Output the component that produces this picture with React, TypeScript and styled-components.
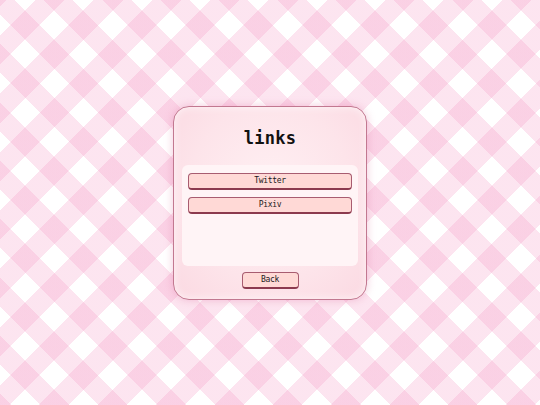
import * as React from 'react';
import styled, { createGlobalStyle } from 'styled-components';

const GlobalStyle = createGlobalStyle`
  html, body {
    margin: 0;
    padding: 0;
  }
  body {
    font-family: "DejaVu Sans Mono", "Liberation Mono", monospace;
    overflow: hidden;
  }
`;

// two diagonal stripe layers crossing give the gingham cloth
const stripe = 'rgba(245, 150, 195, 0.25)';

const Page = styled.div`
  width: 100vw;
  height: 100vh;
  display: flex;
  align-items: center;
  justify-content: center;
  background-color: #ffffff;
  background-image:
    repeating-linear-gradient(
      45deg,
      ${stripe} 0px 7.96px,
      transparent 7.96px 28.6px,
      ${stripe} 28.6px 41.25px
    ),
    repeating-linear-gradient(
      135deg,
      ${stripe} 0px 4.56px,
      transparent 4.56px 25.2px,
      ${stripe} 25.2px 41.25px
    );
`;

const Card = styled.div`
  box-sizing: border-box;
  width: 194px;
  height: 194px;
  display: flex;
  flex-direction: column;
  padding: 0 8px 10px;
  border: 1px solid #c27890;
  border-radius: 16px;
  background: radial-gradient(ellipse at 50% 45%, #fff0f3 0%, #fde4ea 60%, #fbd9e2 100%);
  box-shadow:
    0 0 8px rgba(225, 120, 165, 0.4),
    inset 0 0 8px rgba(255, 255, 255, 0.7);
`;

const Title = styled.h1`
  height: 58px;
  margin: 0;
  padding-top: 4px;
  box-sizing: border-box;
  display: flex;
  align-items: center;
  justify-content: center;
  font-size: 17px;
  font-weight: bold;
  letter-spacing: 0.3px;
  color: #111;
`;

const Panel = styled.div`
  height: 101px;
  box-sizing: border-box;
  padding: 8px 6px;
  display: flex;
  flex-direction: column;
  gap: 7px;
  background: #fff4f6;
  border-radius: 6px;
`;

interface ButtonProps {
  $width?: number;
}

const PinkButton = styled.button<ButtonProps>`
  box-sizing: border-box;
  width: ${(p) => (p.$width ? `${p.$width}px` : '100%')};
  height: 17px;
  padding: 0;
  display: flex;
  align-items: center;
  justify-content: center;
  font-family: "DejaVu Sans Mono", "Liberation Mono", monospace;
  font-size: 8px;
  letter-spacing: -0.3px;
  color: #221a1c;
  background: #ffd9d6;
  border: 1px solid #a85c70;
  border-bottom: 2px solid #8c3a4e;
  border-radius: 4px;
  cursor: pointer;
`;

const Footer = styled.div`
  display: flex;
  justify-content: center;
  padding-top: 6px;
`;

const links = ['Twitter', 'Pixiv'];

export default function App() {
  return (
    <>
      <GlobalStyle />
      <Page>
        <Card>
          <Title>links</Title>
          <Panel>
            {links.map((name) => (
              <PinkButton key={name}>{name}</PinkButton>
            ))}
          </Panel>
          <Footer>
            <PinkButton $width={57}>Back</PinkButton>
          </Footer>
        </Card>
      </Page>
    </>
  );
}
